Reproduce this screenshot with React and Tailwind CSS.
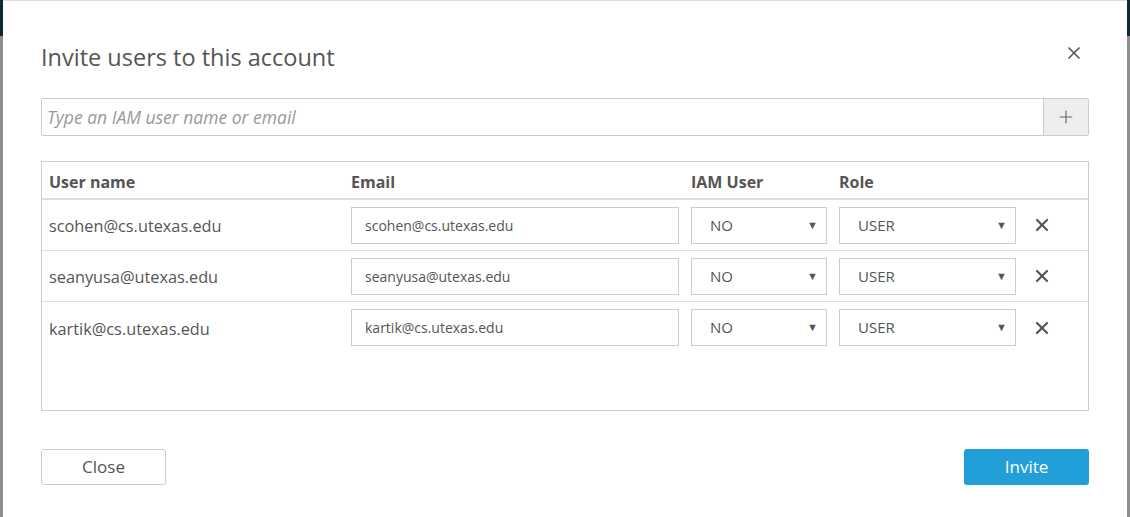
import { Plus, X } from "lucide-react";

const users = [
  { name: "scohen@cs.utexas.edu", iam: "NO", role: "USER" },
  { name: "seanyusa@utexas.edu", iam: "NO", role: "USER" },
  { name: "kartik@cs.utexas.edu", iam: "NO", role: "USER" },
];

const cols = "grid grid-cols-[301px_340px_148px_192px_1fr]";

function Select({ value, width }) {
  return (
    <div
      className={`${width} h-[37px] border border-[#ccc] flex items-center justify-between pl-[18px] pr-[8px] text-[15px] text-[#555]`}
    >
      <span>{value}</span>
      <span className="text-[11px] text-[#555]">▼</span>
    </div>
  );
}

export default function App() {
  return (
    <div
      className="w-[1130px] h-[517px] overflow-hidden bg-[linear-gradient(#0f2a33_0_36px,#8e8e8e_36px)] px-[3px]"
      style={{ fontFamily: '"Open Sans", "Noto Sans", sans-serif' }}
    >
      <div className="h-full bg-white border-t border-[#ddd] px-[38px] flex flex-col">
        {/* HEADER */}
        <div className="flex items-start justify-between pt-[38px] pr-[5px]">
          <h1 className="text-[23.5px] text-[#555] leading-[36px]">
            Invite users to this account
          </h1>
          <button className="mt-[4px] text-[#555]">
            <X size={20} strokeWidth={2} />
          </button>
        </div>

        {/* SEARCH */}
        <div className="mt-[23px] flex h-[38px] border border-[#ccc] rounded-[2px]">
          <input
            className="flex-1 px-[5px] text-[17.5px] italic text-[#555] placeholder:text-[#999] outline-none"
            placeholder="Type an IAM user name or email"
          />
          <div className="w-[45px] bg-[#eee] border-l border-[#ccc] flex items-center justify-center text-[#666]">
            <Plus size={20} strokeWidth={1.4} />
          </div>
        </div>

        {/* TABLE */}
        <div className="mt-[25px] h-[250px] border border-[#ccc]">
          <div className={`${cols} h-[38px] items-center pt-[3px] border-b-2 border-[#ddd] text-[16px] font-bold text-[#555]`}>
            <div className="pl-[7px]">User name</div>
            <div className="pl-[8px]">Email</div>
            <div className="pl-[8px]">IAM User</div>
            <div className="pl-[8px]">Role</div>
            <div />
          </div>
          {users.map((u, i) => (
            <div
              key={u.name}
              className={`${cols} h-[51px] items-center ${i < users.length - 1 ? "border-b border-[#ddd]" : ""}`}
            >
              <div className="pl-[7px] pt-[3px] text-[16.3px] text-[#555]">{u.name}</div>
              <div className="pl-[8px]">
                <div className="w-[328px] h-[37px] border border-[#ccc] flex items-center pl-[13px] text-[14px] text-[#555]">
                  {u.name}
                </div>
              </div>
              <div className="pl-[8px]">
                <Select value={u.iam} width="w-[136px]" />
              </div>
              <div className="pl-[8px]">
                <Select value={u.role} width="w-[177px]" />
              </div>
              <div className="pl-[9px] text-[#555]">
                <X size={20} strokeWidth={2.6} />
              </div>
            </div>
          ))}
        </div>

        {/* FOOTER */}
        <div className="mt-[38px] flex justify-between">
          <button className="w-[125px] h-[36px] border border-[#ccc] rounded-[3px] text-[17px] text-[#555]">
            Close
          </button>
          <button className="w-[125px] h-[36px] bg-[#229fd9] rounded-[3px] text-[17px] text-white">
            Invite
          </button>
        </div>
      </div>
    </div>
  );
}
